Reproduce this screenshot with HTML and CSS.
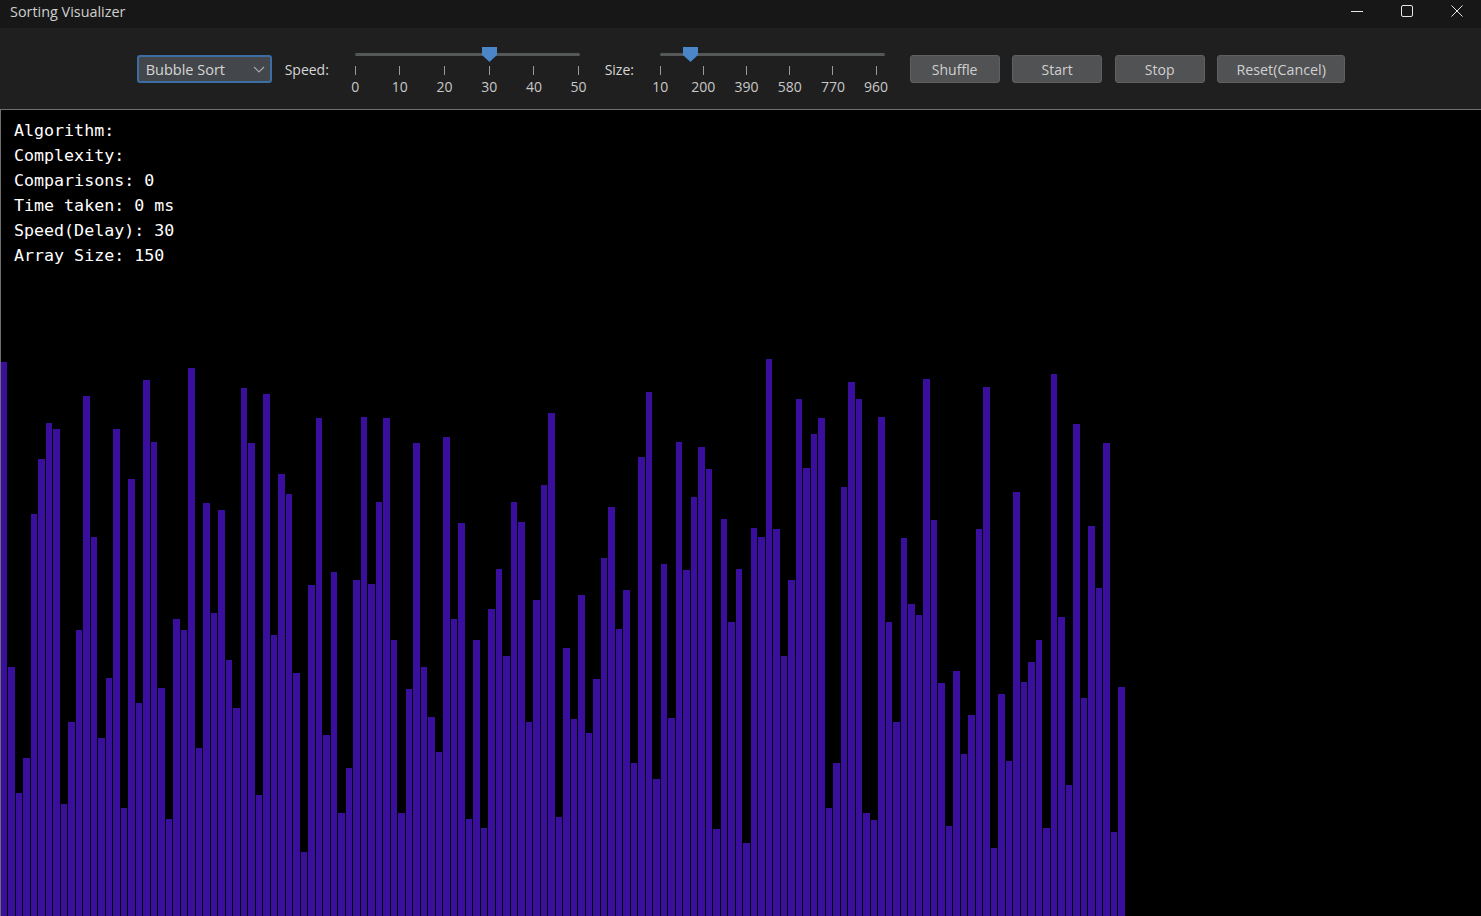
FILE: index.html
```html
<!DOCTYPE html>
<html lang="en">
<head>
    <meta charset="UTF-8">
    <title>Sorting Visualizer</title>
    <link rel="stylesheet" href="styles.css">
</head>
<body>
    <div class="titlebar">
        <span class="app-title">Sorting Visualizer</span>
        <div class="window-controls">
            <button class="window-btn" aria-label="Minimize">
                <svg width="12" height="12" viewBox="0 0 12 12"><path d="M0 6.5H12" stroke="#e6e6e6" fill="none"/></svg>
            </button>
            <button class="window-btn" aria-label="Maximize">
                <svg width="12" height="12" viewBox="0 0 12 12"><rect x="0.5" y="0.5" width="11" height="11" rx="1.5" stroke="#e6e6e6" fill="none"/></svg>
            </button>
            <button class="window-btn" aria-label="Close">
                <svg width="12" height="12" viewBox="0 0 12 12"><path d="M0.5 0.5L11.5 11.5M11.5 0.5L0.5 11.5" stroke="#e6e6e6" fill="none"/></svg>
            </button>
        </div>
    </div>

    <div class="toolbar">
        <div class="combo">
            <span>Bubble Sort</span>
            <svg width="12" height="7" viewBox="0 0 12 7"><path d="M1 1L6 6L11 1" stroke="#a8a8a8" stroke-width="1.2" fill="none"/></svg>
        </div>

        <label class="field-label speed-label">Speed:</label>
        <div class="slider">
            <div class="track"></div>
            <svg class="thumb speed-thumb" width="15" height="15" viewBox="0 0 15 15"><path d="M0 0H15V8L7.5 15L0 8Z" fill="#4a86c8"/></svg>
            <div class="ticks speed-ticks">
                <div class="tick"><i></i><span>0</span></div>
                <div class="tick"><i></i><span>10</span></div>
                <div class="tick"><i></i><span>20</span></div>
                <div class="tick"><i></i><span>30</span></div>
                <div class="tick"><i></i><span>40</span></div>
                <div class="tick"><i></i><span>50</span></div>
            </div>
        </div>

        <label class="field-label size-label">Size:</label>
        <div class="slider">
            <div class="track"></div>
            <svg class="thumb size-thumb" width="15" height="15" viewBox="0 0 15 15"><path d="M0 0H15V8L7.5 15L0 8Z" fill="#4a86c8"/></svg>
            <div class="ticks size-ticks">
                <div class="tick"><i></i><span>10</span></div>
                <div class="tick"><i></i><span>200</span></div>
                <div class="tick"><i></i><span>390</span></div>
                <div class="tick"><i></i><span>580</span></div>
                <div class="tick"><i></i><span>770</span></div>
                <div class="tick"><i></i><span>960</span></div>
            </div>
        </div>

        <div class="actions">
            <button class="btn">Shuffle</button>
            <button class="btn">Start</button>
            <button class="btn">Stop</button>
            <button class="btn btn-wide">Reset(Cancel)</button>
        </div>
    </div>

    <div class="canvas">
        <div class="stats">
            <div>Algorithm:</div>
            <div>Complexity:</div>
            <div>Comparisons: 0</div>
            <div>Time taken: 0 ms</div>
            <div>Speed(Delay): 30</div>
            <div>Array Size: 150</div>
        </div>
        <div class="bars" id="bars"></div>
    </div>

    <script src="script.js"></script>
</body>
</html>
```

FILE: styles.css
```css
* {
    box-sizing: border-box;
}
body {
    margin: 0;
    height: 100vh;
    display: flex;
    flex-direction: column;
    overflow: hidden;
    background-color: #000;
    font-family: "Open Sans", "Noto Sans", sans-serif;
    font-size: 14px;
    color: #d6d6d6;
}
.titlebar {
    height: 28px;
    flex: none;
    display: flex;
    justify-content: space-between;
    align-items: center;
    padding-left: 10px;
    background-color: #171717;
}
.app-title {
    font-size: 14.4px;
    color: #cfcfcf;
    margin-top: -5px;
}
.window-controls {
    display: flex;
    height: 100%;
    margin-right: -1px;
}
.window-btn {
    width: 50px;
    height: 100%;
    padding: 0 0 6px;
    border: none;
    background: none;
    display: flex;
    justify-content: center;
    align-items: center;
}
.toolbar {
    height: 82px;
    flex: none;
    display: flex;
    justify-content: center;
    align-items: flex-start;
    padding: 27px 0 0 0.8px;
    background-color: #1f1f1f;
    border-bottom: 1px solid #6e6e6e;
}
.combo {
    width: 135px;
    height: 28px;
    display: flex;
    justify-content: space-between;
    align-items: center;
    padding: 0 5px 0 7px;
    background-color: #43474b;
    border: 2px solid #3c6da3;
    border-radius: 3px;
    font-size: 14.5px;
    color: #d6d6d6;
}
.field-label {
    margin-top: 1px;
    line-height: 28px;
    white-space: nowrap;
}
.speed-label {
    width: 45px;
    margin-left: 13px;
    margin-right: 25px;
}
.size-label {
    width: 30px;
    margin-left: 25px;
    margin-right: 25px;
}
.slider {
    position: relative;
    width: 225px;
    height: 54px;
    margin-top: -7px;
}
.track {
    height: 3px;
    margin-top: 5px;
    background-color: #555859;
    border-radius: 2px;
}
.thumb {
    position: absolute;
    top: -1px;
}
.speed-thumb {
    left: 127px;
}
.size-thumb {
    left: 23px;
}
.ticks {
    display: flex;
    justify-content: space-between;
    margin-top: 10px;
}
.speed-ticks {
    margin-right: 0.5px;
}
.size-ticks {
    margin-right: 8px;
}
.tick {
    width: 1px;
    display: flex;
    flex-direction: column;
    align-items: center;
}
.tick i {
    width: 1px;
    height: 9px;
    flex: none;
    background-color: #9a9a9a;
}
.tick span {
    margin-top: 2px;
    font-size: 14px;
    line-height: 19px;
    color: #c8c8c8;
}
.actions {
    display: flex;
    gap: 12.5px;
    margin-left: 25px;
}
.btn {
    width: 90px;
    height: 28px;
    padding: 0;
    background-color: #505254;
    border: 1px solid #5e6062;
    border-radius: 3px;
    font-family: inherit;
    font-size: 14px;
    color: #d0d0d0;
}
.btn-wide {
    width: 128px;
    font-size: 14.3px;
}
.canvas {
    flex: 1;
    position: relative;
    display: flex;
    align-items: flex-end;
    background-color: #000;
    border-left: 1px solid #6e6e6e;
}
.stats {
    position: absolute;
    top: 8px;
    left: 13px;
    font-family: "DejaVu Sans Mono", "Liberation Mono", monospace;
    font-size: 16.65px;
    line-height: 25px;
    color: #fff;
}
.bars {
    display: flex;
    align-items: flex-end;
    margin-left: -0.4px;
}
.bar {
    width: 6.5px;
    margin-right: 1px;
    flex: none;
    background-color: #3a0f9e;
}
```

FILE: script.js
```js
// current array, one height in px per element
var heights = [
    554, 249, 123, 158, 402, 457, 493, 487, 112, 194, 286, 520, 379, 178, 238,
    487, 108, 437, 213, 536, 474, 228, 97, 297, 286, 548, 168, 413, 303, 406,
    256, 208, 528, 473, 121, 522, 281, 442, 422, 243, 64, 331, 498, 181, 344,
    103, 148, 336, 499, 332, 414, 498, 276, 103, 227, 473, 249, 199, 164, 479,
    297, 393, 97, 276, 88, 307, 347, 260, 414, 394, 194, 316, 431, 503, 99,
    268, 197, 321, 183, 237, 358, 409, 287, 326, 153, 459, 524, 137, 352, 198,
    474, 346, 419, 469, 447, 87, 397, 294, 347, 73, 388, 379, 557, 387, 260,
    336, 517, 448, 482, 498, 108, 153, 429, 534, 517, 103, 96, 499, 294, 194,
    378, 312, 301, 537, 396, 233, 90, 245, 162, 201, 387, 529, 68, 222, 155,
    424, 234, 254, 276, 88, 542, 299, 131, 492, 218, 390, 328, 473, 84, 229
];

var container = document.getElementById('bars');
heights.forEach(function (h) {
    var bar = document.createElement('div');
    bar.className = 'bar';
    bar.style.height = h + 'px';
    container.appendChild(bar);
});
```
